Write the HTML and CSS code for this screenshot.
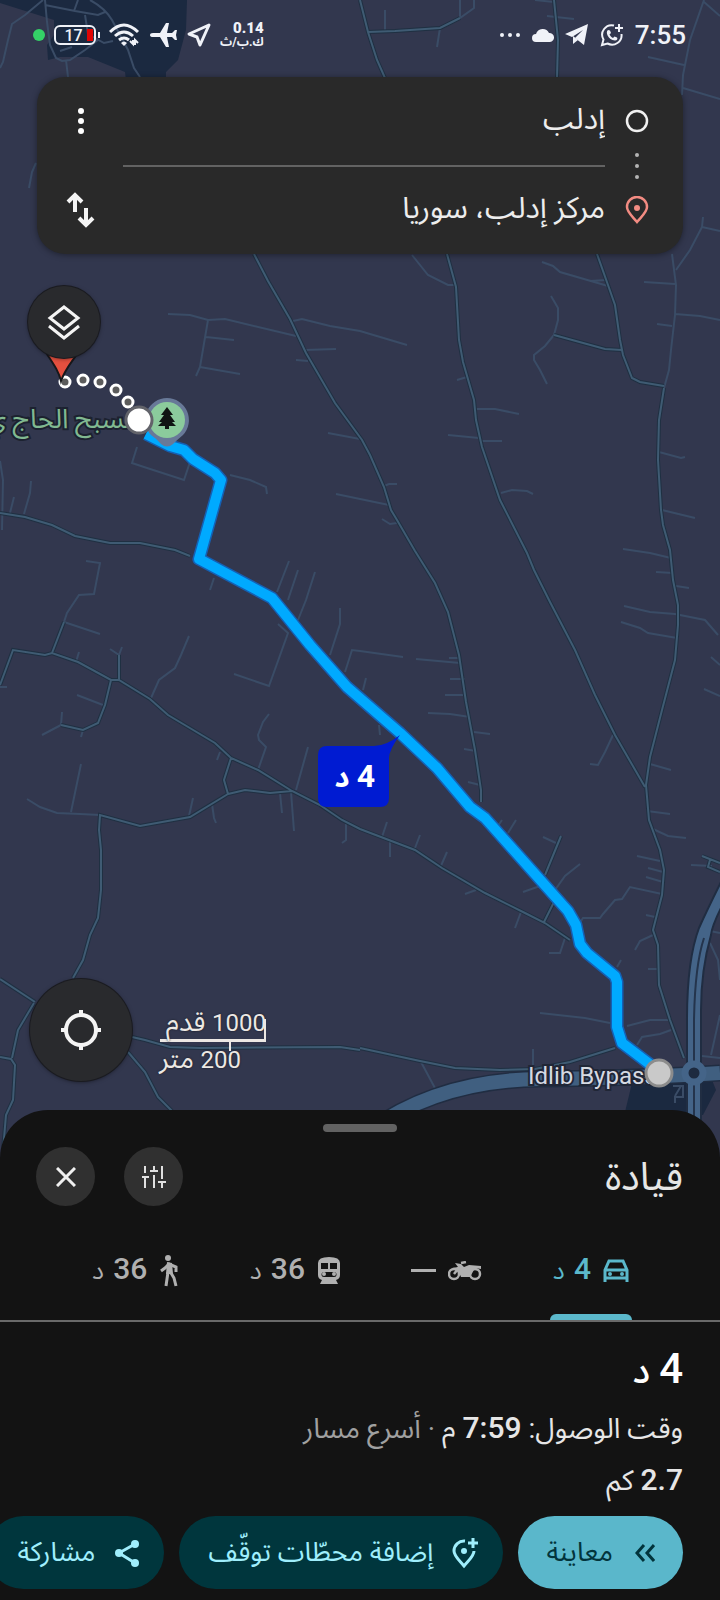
FILE: index.html
```
<!DOCTYPE html>
<html lang="ar" dir="rtl">
<head>
    <meta charset="UTF-8">
    <meta name="viewport" content="width=device-width, initial-scale=1">
    <title>قيادة</title>
    <link rel="stylesheet" href="styles.css">
</head>
<body>
    <div class="screen">
        <svg class="map" viewBox="0 0 720 1600" preserveAspectRatio="xMidYMin slice" aria-hidden="true">
            <!-- water -->
            <path class="water" d="M0 0H187L186 30L178 60L166 72V80H126L125 72L88 57H60L48 60L47 45L54 35V20L0 3Z"/>
            <path class="water" d="M625 1112L632 1083L712 1080L716 1090L703 1115Z"/>

            <!-- small streets -->
            <g class="street">
                <path d="M43 0L25 15L12 24L8 40L3 62L0 68M45 0L47 22L50 45L56 58L62 61L70 60L85 50L98 40M45 5L75 11L98 15L105 12M78 0L74 11M90 0Q105 8 112 20L128 50L134 68L140 77M60 51L72 47M85 15L88 34L104 43L113 41M66 60L68 77M36 163L32 172L29 188"/>
                <path d="M385 10V30M460 0V18L474 8V0M440 28L437 47M547 16L574 19M535 0L554 2M704 0L690 40L683 75L682 95M648 57L684 65M683 88L720 99M704 2L720 16M703 217L702 227L690 250L676 270M702 227L720 231"/>
                <path d="M168 314L190 315L208 320L225 319L296 336M208 320L200 367L196 376M206 337L234 340M200 367L240 374M293 321L302 319L330 326L360 331L407 345M305 350L336 349M296 360L308 361M137 447L132 463L144 467L184 480L190 462M230 475L250 480L266 487L267 494M0 461L3 480L2 530M31 481L30 493L24 514M14 497L10 513M328 433L360 439M336 494L389 505M86 561L100 563L94 594L79 595L67 613L64 622M214 578L210 590M289 561L277 592M298 570L288 600M315 572L306 600L298 620"/>
                <path d="M412 255L428 275L448 285H455M457 380L467 377M474 409H495L519 414M448 435L479 438M482 441H502M501 493L512 490L527 491L533 494M384 486L389 484H397M382 519L390 524L397 523M551 296L558 308V320L554 335L545 346L534 355V360L540 370L547 384M542 262L553 266L560 272L608 286M590 281L606 280M644 282L675 284M657 324L672 326M675 314L700 316L720 320M659 452L681 458L685 457M662 510L695 518M623 549L650 553L671 558M656 572L673 573M676 586L689 588M672 254L676 285L675 315L671 350L669 370L664 388"/>
                <path d="M64 622L100 634M0 687H7M119 655L110 649M119 655L122 647M61 725L42 735M61 725L62 712M83 730L81 737M77 695L103 705M76 662L79 652M151 698L159 680L175 668L181 655L189 636M217 760L220 752M100 815L80 814L57 813L40 807L27 799M71 812L81 764M189 816L193 798M212 804L214 818L216 823M258 770L266 747L259 740L258 735L263 722L269 714M296 790L308 747M280 793L282 813M291 792L294 831M346 824V840L342 843M234 674L269 686L288 633L278 624M330 655L340 624V608M345 672L352 650L360 651L403 657M416 659L460 663"/>
                <path d="M449 658H460M450 679H465M445 695H466M428 713L450 714L470 717M474 732L490 734M464 749L476 751M468 782L480 785M366 678L363 690M379 725L380 735M624 606L650 612L675 614L705 620L718 635M621 622L640 628L648 633L677 638M711 657L720 665M704 689L720 696M613 735L605 752L598 765L590 764M650 764L671 770M647 811L670 814M653 829L668 836L686 838M637 856L660 861M648 868L663 872M646 877L663 882M662 894L630 887L622 899L615 900L603 914L600 918H583L575 930M646 915L655 917M653 935L640 941L635 950M648 969H659M543 837L556 843M580 864L565 876L555 890M523 892L540 886M565 938L560 953H549M521 912L515 928M465 894L476 890M440 868L447 852M415 848L420 835M390 840V857M382 837L387 822M508 833L516 820M498 826L502 820M617 967L621 960M691 865L712 866"/>
                <path d="M421 1062L436 1090M533 1049V1067M540 1013L585 1018L610 1023M627 1026L650 1020H670M637 1045L642 1037L660 1034L671 1030M702 1056L720 1058M711 1055L720 1015M710 943L718 960L720 980M710 931L720 933M673 1086H683V1097H675V1103M675 1096L681 1086"/>
            </g>

            <!-- country roads: dark casing first, then the road itself -->
            <defs>
                <path id="roads" d="M360 0L368 32L377 60L385 78M368 32L395 31L440 28L460 18M554 0L558 40L557 78M254 254L268 281L290 319L306 353L335 403L362 440L370 455L384 487L391 510L397 520L415 551L435 583L448 612L459 655L466 702L475 750L481 790V802M447 254L456 287L459 340L463 362L474 400L476 420L482 447L500 500L527 553L534 570L550 602L575 650L595 695L615 735L645 787M597 254L608 285L615 305L620 340L623 355L632 378L640 382L664 386M554 335L605 349L622 350M664 388L659 420L658 460L661 510L663 525L670 550L673 580L678 605V625L675 660L662 710L650 757L646 785L649 820L660 850L664 870L662 895L653 930L658 945L659 985L670 1020L684 1058M0 513L25 517L52 525L75 536L110 543H140L175 550L190 556M0 685L13 650L45 655L52 653L78 662L111 680H119L150 699L168 715L215 743L231 758L258 770L292 791L320 805L342 820L360 829L415 850L442 868L485 893L525 913L545 923L570 940M52 653L64 622M119 680V655M111 680L105 705L98 723L83 730L61 725M231 758L224 780L228 794L245 790L270 793L292 791M228 794L190 817L140 826L100 815L99 830L101 850V890L98 918L90 935L83 960L73 978M702 856L720 863M710 860L708 867L720 872M561 836L545 875M544 922L555 900M360 1048L420 1061L455 1068L500 1070L535 1069L570 1062L615 1048M0 979L35 1002M34 1003L18 1030L12 1058M0 1057L11 1059L15 1065L13 1100L6 1115L3 1150M132 1037L145 1040L170 1047L200 1048L340 1047L360 1050M128 1052L145 1072L158 1097L172 1111"/>
                <path id="bypass" d="M370 1130Q440 1080 540 1079T720 1073"/>
            </defs>
            <use href="#roads" class="road-casing"/>
            <use href="#roads" class="road"/>

            <!-- highways and the roundabout -->
            <use href="#bypass" class="bypass-casing"/>
            <path class="highway" d="M687 1140V1020Q687 960 699 928Q708 908 724 876V902Q712 925 711 935Q701 970 701 1010V1140Z"/>
            <use href="#bypass" class="bypass"/>
            <path class="median" d="M694 1130V1020Q695 965 704 938"/>
            <circle class="roundabout" cx="694" cy="1073" r="9"/>

            <!-- place label -->
            <text class="place" x="139" y="428">مسبح الحاج ي</text>

            <!-- driving route -->
            <path class="route-glow" d="M146 434L170 446L184 450L193 459L215 473L221 480L199 559L272 598L310 645L347 687L400 733L437 768L470 807L485 818L568 911L576 925L580 944L587 953L615 976L617 982V1027L622 1043L660 1072"/>
            <path class="route-line" d="M146 434L170 446L184 450L193 459L215 473L221 480L199 559L272 598L310 645L347 687L400 733L437 768L470 807L485 818L568 911L576 925L580 944L587 953L615 976L617 982V1027L622 1043L660 1072"/>

            <!-- walking part -->
            <g class="walk-dots">
                <circle cx="65" cy="382" r="5"/>
                <circle cx="83" cy="380" r="5"/>
                <circle cx="100" cy="382" r="5"/>
                <circle cx="116" cy="390" r="5"/>
                <circle cx="128" cy="402" r="5"/>
            </g>
            <path class="red-pin" d="M38 340H86C76 358 66 366 61 381C58 368 50 360 38 340Z"/>

            <!-- park pin -->
            <path class="park-edge" d="M167 398A22 22 0 0 1 183 435Q177 440 173 444Q167 449 161 444Q157 439 151 435A22 22 0 0 1 167 398Z"/>
            <circle class="park" cx="167" cy="420" r="18"/>
            <path class="tree" d="M167 407L173 415H170L175 422H172L176 426H169V429H165V426H158L162 422H159L164 415H161Z"/>
            <circle class="stop-start" cx="139" cy="420" r="13"/>

            <text class="road-name" x="528" y="1084">Idlib Bypass</text>
            <circle class="stop-end" cx="659" cy="1073" r="13"/>

            <!-- time callout -->
            <path class="callout" d="M327 746H374Q386 746 400 735Q389 750 389 758V798Q389 807 380 807H327Q318 807 318 798V755Q318 746 327 746Z"/>
            <text class="callout-text" x="375" y="787"><tspan class="callout-num">4</tspan> د</text>
        </svg>

        <header class="status" dir="ltr">
            <div class="status-group">
                <span class="live-dot"></span>
                <span class="battery"><span class="battery-box">17</span></span>
                <svg width="32" height="24" viewBox="0 0 32 24">
                    <path d="M1 9Q15 -5 29 9M6 13Q15 5 24 13M10 17Q15 13 20 17" fill="none" stroke="#f0f2f8" stroke-width="3"/>
                    <path d="M12 20Q15 17 18 20L15 23Z" fill="#f0f2f8"/>
                    <path d="M21 18L24 21V17M29 20L26 17V22" fill="none" stroke="#f0f2f8" stroke-width="2"/>
                </svg>
                <svg width="28" height="24" viewBox="0 0 28 24">
                    <path d="M0 12Q0 10 3 10H10L16 0H19L17 10H22L25 7H27L26 12L27 17H25L22 14H17L19 24H16L10 14H3Q0 14 0 12Z" fill="#f0f2f8"/>
                </svg>
                <svg width="24" height="26" viewBox="1 0 24 26">
                    <path d="M23 3L3 12L11 15L14 23Z" fill="none" stroke="#f0f2f8" stroke-width="3" stroke-linejoin="round"/>
                </svg>
                <span class="speed"><b>0.14</b><span dir="rtl">ك.ب/ث</span></span>
            </div>
            <div class="status-group right">
                <svg width="22" height="8" viewBox="0 0 22 8" fill="#f0f2f8">
                    <circle cx="3" cy="4" r="2"/><circle cx="11" cy="4" r="2"/><circle cx="19" cy="4" r="2"/>
                </svg>
                <svg width="22" height="14" viewBox="0 0 22 14">
                    <path d="M4 14A4 4 0 0 1 4 6A7 7 0 0 1 17 5A4.500 4.500 0 0 1 18 14Z" fill="#f0f2f8"/>
                </svg>
                <svg width="24" height="22" viewBox="0 0 24 22">
                    <path d="M23 0L0 10L7 13L18 6L10 14L19 21Z" fill="#f0f2f8"/>
                    <path d="M8 12V20L13 16Z" fill="#f0f2f8"/>
                </svg>
                <svg width="24" height="24" viewBox="0 0 24 24">
                    <path d="M14 2.500A9.500 9.500 0 0 0 3.500 16.500L2 22L7.500 20.500A9.500 9.500 0 0 0 21.500 11" fill="none" stroke="#f0f2f8" stroke-width="2"/>
                    <path d="M19 1V9M15 5H23" stroke="#f0f2f8" stroke-width="2"/>
                    <path d="M8 7C5 9 8 17 15 17.500C17 17.500 18 15.500 17 14.500L14.500 13.500L13 15C11 14 10 12.500 9.500 11.500L11 10L10 7.500Z" fill="#f0f2f8"/>
                </svg>
                <time class="clock">7:55</time>
            </div>
        </header>

        <form class="directions">
            <svg class="end-icon" width="24" height="24" viewBox="0 0 24 24">
                <circle cx="12" cy="12" r="10" fill="none" stroke="#f1f1f1" stroke-width="2.500"/>
            </svg>
            <input class="field" type="text" value="إدلب" aria-label="نقطة الانطلاق">
            <button class="card-button" type="button" aria-label="خيارات">
                <svg width="8" height="28" viewBox="0 0 8 28" fill="#fff">
                    <circle cx="4" cy="4" r="3"/><circle cx="4" cy="14" r="3"/><circle cx="4" cy="24" r="3"/>
                </svg>
            </button>

            <svg class="end-icon" width="24" height="28" viewBox="0 0 24 28" fill="#b4b4b4">
                <circle cx="12" cy="3" r="2"/><circle cx="12" cy="14" r="2"/><circle cx="12" cy="25" r="2"/>
            </svg>
            <hr class="field-line">
            <span></span>

            <svg class="end-icon" width="24" height="28" viewBox="0 0 24 28">
                <path d="M12 26C7 20 2 16 2 11A10 10 0 0 1 22 11C22 16 17 20 12 26Z" fill="none" stroke="#f28b82" stroke-width="2.500"/>
                <circle cx="12" cy="12" r="3" fill="#f28b82"/>
            </svg>
            <input class="field" type="text" value="مركز إدلب، سوريا" aria-label="الوجهة">
            <button class="card-button" type="button" aria-label="تبديل">
                <svg width="30" height="38" viewBox="0 0 30 38" fill="none" stroke="#f4f4f4" stroke-width="4">
                    <path d="M9 21V4M2 11L9 4L16 11M20 17V34M13 27L20 34L27 27"/>
                </svg>
            </button>
        </form>

        <section class="map-controls" dir="ltr">
            <button class="round-button layers" type="button" aria-label="الطبقات">
                <svg width="34" height="36" viewBox="0 0 34 36" fill="none" stroke="#f4f4f4" stroke-width="3">
                    <path d="M17 3L31 14L17 25L3 14ZM2 22L17 34L32 22"/>
                </svg>
            </button>
            <div class="map-bottom">
                <button class="round-button locate" type="button" aria-label="موقعي">
                    <svg width="42" height="42" viewBox="0 0 42 42" fill="none" stroke="#f4f4f4" stroke-width="4">
                        <circle cx="21" cy="21" r="15"/>
                        <path d="M21 1V7M21 35V41M1 21H7M35 21H41"/>
                    </svg>
                </button>
                <div class="scale">
                    <div class="scale-feet" dir="rtl"><span class="scale-num">1000</span> قدم</div>
                    <div class="scale-meters" dir="rtl"><span class="scale-num">200</span> متر</div>
                </div>
            </div>
        </section>

        <main class="sheet">
            <div class="handle"></div>
            <div class="sheet-head">
                <h1 class="sheet-title">قيادة</h1>
                <button class="head-button" type="button" aria-label="خيارات المسار">
                    <svg width="26" height="24" viewBox="0 0 26 24" fill="none" stroke="#e0e0e0" stroke-width="2">
                        <path d="M4 1V8M1 12H8M4 12V23M13 1V6M9 6H17M13 10V23M21 1V14M17 17H25M21 17V23"/>
                    </svg>
                </button>
                <button class="head-button" type="button" aria-label="إغلاق">
                    <svg width="20" height="20" viewBox="0 0 20 20" fill="none" stroke="#f0f0f0" stroke-width="3">
                        <path d="M1 1L19 19M19 1L1 19"/>
                    </svg>
                </button>
            </div>

            <nav class="modes">
                <button class="mode active" type="button">
                    <svg width="26" height="24" viewBox="0 0 26 24">
                        <path d="M2 23V11L6 2H20L24 11V23M3 11H23M3 19H23" fill="none" stroke="currentColor" stroke-width="3"/>
                        <circle cx="7" cy="15" r="2" fill="currentColor"/><circle cx="19" cy="15" r="2" fill="currentColor"/>
                    </svg>
                    <span><span class="mode-num">4</span> د</span>
                </button>
                <button class="mode" type="button">
                    <svg width="34" height="20" viewBox="0 0 34 20">
                        <g fill="none" stroke="currentColor" stroke-width="2.500"><circle cx="6" cy="13" r="5"/><circle cx="27" cy="13" r="5"/><path d="M6 13L13 4M13 2L18 1"/></g>
                        <path d="M7 2L13 3L16 6L21 4L33 5V8L27 7L22 16H13L10 9L4 7L10 6Z" fill="currentColor"/>
                    </svg>
                    <span class="dash" aria-label="غير متاح"></span>
                </button>
                <button class="mode" type="button">
                    <svg width="24" height="28" viewBox="0 0 24 28">
                        <path fill="currentColor" fill-rule="evenodd" d="M1 6Q1 0 12 0T23 6V18Q23 22 19 23L21 27H3L5 23Q1 22 1 18ZM4 6V12H11V6ZM13 6V12H20V6ZM7 15A2.500 2.500 0 0 0 7 20H17A2.500 2.500 0 0 0 17 15Z"/>
                        <circle cx="7" cy="17" r="2" fill="currentColor"/><circle cx="17" cy="17" r="2" fill="currentColor"/>
                    </svg>
                    <span><span class="mode-num">36</span> د</span>
                </button>
                <button class="mode" type="button">
                    <svg width="20" height="32" viewBox="0 0 20 32">
                        <circle cx="9" cy="3" r="3" fill="currentColor"/>
                        <path d="M8 7L13 8L14 19H7Z" fill="currentColor"/>
                        <path d="M2 16L6 13L10 9L17 12V17M9 17L7 31M12 18L15 23L17 31" fill="none" stroke="currentColor" stroke-width="3"/>
                    </svg>
                    <span><span class="mode-num">36</span> د</span>
                </button>
            </nav>

            <section class="summary">
                <h2 class="duration"><span class="duration-num">4</span> د</h2>
                <p class="detail">وقت الوصول: <b class="num">7:59</b> م <span class="muted">· أسرع مسار</span></p>
                <p class="detail"><b class="num">2.7</b> كم</p>
            </section>

            <div class="actions">
                <button class="pill primary" type="button">
                    <svg width="20" height="18" viewBox="0 0 20 18" fill="none" stroke="currentColor" stroke-width="3">
                        <path d="M9 1L2 9L9 17M19 1L12 9L19 17"/>
                    </svg>
                    معاينة
                </button>
                <button class="pill" type="button">
                    <svg width="28" height="32" viewBox="0 0 28 32">
                        <path d="M14 4A10 10 0 0 0 3 14C3 19 8 23 13 29C18 23 23 19 23 14" fill="none" stroke="currentColor" stroke-width="3"/>
                        <path d="M22 1V11M17 6H27" stroke="currentColor" stroke-width="3"/>
                        <circle cx="13" cy="14" r="3" fill="currentColor"/>
                    </svg>
                    إضافة محطّات توقّف
                </button>
                <button class="pill" type="button">
                    <svg width="26" height="28" viewBox="0 0 26 28">
                        <path d="M21 5L5 14L21 24" fill="none" stroke="currentColor" stroke-width="3"/>
                        <g fill="currentColor"><circle cx="21" cy="5" r="4"/><circle cx="5" cy="14" r="4"/><circle cx="21" cy="24" r="4"/></g>
                    </svg>
                    مشاركة
                </button>
            </div>
        </main>
    </div>
</body>
</html>
```

FILE: styles.css
```
* {
    box-sizing: border-box;
}
body {
    margin: 0;
    background: #131313;
    color: #e6e6e6;
    font-family: Roboto, "Noto Sans Arabic", "DejaVu Sans", sans-serif;
    font-size: 24px;
}
button,
input {
    font-family: inherit;
    color: inherit;
}
button {
    border: none;
    padding: 0;
    cursor: pointer;
}
svg {
    flex: none;
    display: block;
}
.screen {
    position: relative;
    display: flex;
    flex-direction: column;
    min-height: 100vh;
    overflow: hidden;
}

/* map */
.map {
    position: absolute;
    top: 0;
    left: 0;
    width: 100%;
    height: 100%;
    background: #32374e;
}
.water { fill: #1b2940; }
.street {
    fill: none;
    stroke: #3a4c66;
    stroke-width: 2;
}
.road-casing {
    fill: none;
    stroke: #1f3042;
    stroke-width: 4;
}
.road {
    fill: none;
    stroke: #3f5b73;
    stroke-width: 2;
}
.bypass-casing {
    fill: none;
    stroke: #202d42;
    stroke-width: 17;
}
.bypass {
    fill: none;
    stroke: #405f80;
    stroke-width: 14;
}
.highway {
    fill: #446488;
    stroke: #202d42;
    stroke-width: 2;
}
.median {
    fill: none;
    stroke: #24344c;
    stroke-width: 2;
}
.roundabout {
    fill: #1d2a3f;
    stroke: #446488;
    stroke-width: 7;
}
.place {
    direction: rtl;
    font-size: 27px;
    fill: #81b991;
    stroke: #1c2230;
    stroke-width: 4;
    paint-order: stroke;
}
.road-name {
    direction: ltr;
    font-size: 24px;
    fill: #d5d9e2;
    stroke: #202636;
    stroke-width: 4;
    paint-order: stroke;
}
.route-glow,
.route-line {
    fill: none;
    stroke-linejoin: round;
}
.route-glow {
    stroke: #1560b4;
    stroke-width: 13;
}
.route-line {
    stroke: #00aaff;
    stroke-width: 10;
}
.walk-dots {
    fill: #5c5c5c;
    stroke: #fff;
    stroke-width: 3;
}
.red-pin {
    fill: #e4503f;
    stroke: #17181b;
    stroke-width: 2;
}
.park-edge { fill: #687998; }
.park { fill: #8bcb9c; }
.tree { fill: #101513; }
.stop-start {
    fill: #fff;
    stroke: #62636a;
    stroke-width: 3;
}
.stop-end {
    fill: #c9c9c9;
    stroke: #8c8c8c;
    stroke-width: 3;
}
.callout { fill: #001bd2; }
.callout-text {
    direction: rtl;
    font-size: 29px;
    font-weight: bold;
    fill: #fff;
}
.callout-num { font-size: 32px; }

/* status bar */
.status {
    position: relative;
    display: flex;
    justify-content: space-between;
    align-items: center;
    height: 77px;
    padding: 0 34px 8px 33px;
    color: #f0f2f8;
}
.status-group {
    display: flex;
    align-items: center;
    gap: 9px;
}
.status-group.right { gap: 11px; }
.live-dot {
    width: 12px;
    height: 12px;
    border-radius: 50%;
    background: #34d167;
}
.battery {
    display: flex;
    align-items: center;
}
.battery::after {
    content: "";
    width: 2px;
    height: 6px;
    margin-left: 2px;
    background: #f0f2f8;
}
.battery-box {
    width: 42px;
    height: 20px;
    padding-right: 3px;
    border: 2px solid #f0f2f8;
    border-radius: 6px;
    background: linear-gradient(#e00505, #e00505) 31px 2px / 6px 12px no-repeat;
    font-size: 16px;
    font-weight: 500;
    line-height: 17px;
    text-align: center;
}
.speed {
    display: flex;
    flex-direction: column;
    align-items: flex-end;
    font-size: 12px;
    font-weight: bold;
    line-height: 14px;
}
.speed b { font-size: 15px; }
.clock {
    font-size: 26px;
    font-weight: 500;
}

/* start and destination */
.directions {
    position: relative;
    display: grid;
    grid-template-columns: 24px 1fr 44px;
    grid-template-rows: 60px 29px 60px;
    column-gap: 20px;
    align-items: center;
    margin: 0 37px;
    padding: 14px 34px 14px 22px;
    border-radius: 28px;
    background: #292929;
    box-shadow: 0 1px 6px rgba(0,0,0,0.4);
}
.field {
    width: 100%;
    height: 60px;
    padding: 0 0 4px;
    border: none;
    background: none;
    color: #ededed;
    font-size: 30px;
}
.field-line {
    width: 100%;
    margin: 0;
    border: none;
    border-top: 2px solid #626262;
}
.card-button {
    display: flex;
    justify-content: center;
    align-items: center;
    height: 60px;
    background: none;
}

/* buttons over the map */
.map-controls {
    position: relative;
    flex: 1;
    display: flex;
    flex-direction: column;
    justify-content: space-between;
    align-items: flex-start;
    padding: 32px 28px 29px;
}
.round-button {
    display: flex;
    justify-content: center;
    align-items: center;
    border-radius: 50%;
    background: #292a2d;
    box-shadow: 0 0 0 1px #1a1b20, 0 1px 4px rgba(0,0,0,0.5);
}
.layers {
    width: 72px;
    height: 72px;
}
.locate {
    width: 102px;
    height: 102px;
}
.map-bottom {
    display: flex;
    align-items: center;
    gap: 28px;
    padding-left: 2px;
}
.scale {
    width: 106px;
    padding-top: 20px;
    color: #ece8e4;
    font-size: 27px;
    line-height: 34px;
    white-space: nowrap;
    text-shadow: 0 0 2px #14161e;
}
.scale-num {
    font-size: 24px;
    line-height: 1;
}
.scale-feet {
    position: relative;
    border-bottom: 3px solid #ece8e4;
}
.scale-feet::before {
    content: "";
    position: absolute;
    right: 0;
    bottom: 0;
    width: 2px;
    height: 20px;
    background: #ece8e4;
}
.scale-feet::after {
    content: "";
    position: absolute;
    right: 35px;
    top: 100%;
    width: 2px;
    height: 12px;
    background: #ece8e4;
}
.scale-meters { padding-right: 25px; }

/* bottom sheet */
.sheet {
    position: relative;
    padding-top: 14px;
    border-radius: 48px 48px 0 0;
    background: #131313;
}
.handle {
    width: 74px;
    height: 8px;
    margin: 0 auto 15px;
    border-radius: 4px;
    background: #626262;
}
.sheet-head {
    display: flex;
    align-items: center;
    gap: 29px;
    padding: 0 37px 0 36px;
}
.sheet-title {
    flex: 1;
    margin: 0;
    font-size: 39px;
    font-weight: normal;
    line-height: 58px;
}
.head-button {
    display: flex;
    justify-content: center;
    align-items: center;
    width: 59px;
    height: 59px;
    border-radius: 50%;
    background: #303030;
}
.modes {
    display: flex;
    justify-content: space-between;
    height: 116px;
    padding: 15px 88px 0 89px;
    border-bottom: 2px solid #6a6a6a;
}
.mode {
    position: relative;
    display: flex;
    align-items: center;
    gap: 12px;
    height: 99px;
    padding: 0 3px;
    background: none;
    color: #b0b0b0;
    font-size: 25px;
}
.mode.active { color: #5bb8cb; }
.mode.active::after {
    content: "";
    position: absolute;
    left: 0;
    right: 0;
    bottom: 0;
    height: 6px;
    border-radius: 6px 6px 0 0;
    background: #5bb8cb;
}
.mode-num {
    margin-left: 3px;
    font-size: 30px;
    font-weight: 500;
    line-height: 1;
}
.num {
    font-size: 30px;
    font-weight: 500;
    line-height: 1;
}
.dash {
    width: 25px;
    height: 3px;
    background: currentColor;
}
.summary { padding: 17px 37px 9px; }
.duration {
    margin: 0;
    color: #fff;
    font-size: 36px;
    font-weight: 500;
    line-height: 64px;
}
.duration-num {
    font-size: 42px;
    line-height: 1;
}
.detail {
    margin: 0;
    font-size: 28px;
    line-height: 52px;
}
.muted { color: #a0a0a0; }
.actions {
    display: flex;
    gap: 15px;
    padding: 0 37px 11px;
}
.pill {
    flex: none;
    display: flex;
    align-items: center;
    gap: 18px;
    height: 73px;
    padding: 0 24px 0 30px;
    border-radius: 37px;
    background: #00363d;
    color: #9feefc;
    font-size: 27px;
}
.pill.primary {
    gap: 22px;
    padding: 0 28px;
    background: #5ab7cb;
    color: #02343c;
}
```
